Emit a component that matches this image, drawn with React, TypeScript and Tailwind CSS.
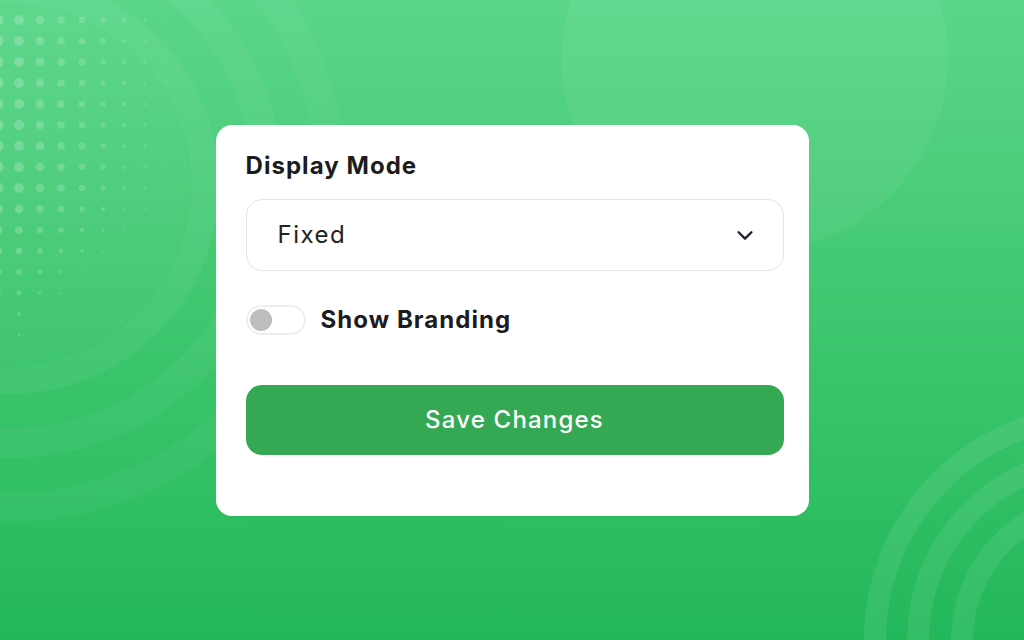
import React, { useState } from "react";

const dots = Array.from({ length: 16 }).flatMap((_, row) =>
  Array.from({ length: 9 }).map((_, col) => {
    const r = Math.max(0, 5.5 - col * 0.55 - Math.max(0, row - 8) * 0.55);
    return { x: col * 21 - 2, y: 20 + row * 21, r, o: 0.22 - col * 0.015 };
  })
);

function Backdrop() {
  return (
    <svg
      className="absolute inset-0 h-full w-full pointer-events-none"
      viewBox="0 0 1024 640"
      preserveAspectRatio="none"
    >
      {/* big soft circle top right */}
      <circle cx="755" cy="58" r="193" fill="#ffffff" fillOpacity="0.05" />

      {/* left rings */}
      <circle cx="10" cy="185" r="180" fill="#ffffff" fillOpacity="0.03" />
      <circle cx="10" cy="185" r="195" fill="none" stroke="#ffffff" strokeOpacity="0.05" strokeWidth="28" />
      <circle cx="10" cy="185" r="258" fill="none" stroke="#ffffff" strokeOpacity="0.045" strokeWidth="30" />
      <circle cx="10" cy="185" r="322" fill="none" stroke="#ffffff" strokeOpacity="0.035" strokeWidth="30" />

      {/* dot grid */}
      {dots
        .filter((d) => d.r > 0.6)
        .map((d, i) => (
          <circle key={i} cx={d.x} cy={d.y} r={d.r} fill="#ffffff" fillOpacity={Math.max(0.06, d.o)} />
        ))}

      {/* bottom right rings */}
      <circle cx="1100" cy="640" r="225" fill="none" stroke="#ffffff" strokeOpacity="0.08" strokeWidth="22" />
      <circle cx="1100" cy="640" r="182" fill="none" stroke="#ffffff" strokeOpacity="0.08" strokeWidth="22" />
      <circle cx="1100" cy="640" r="138" fill="none" stroke="#ffffff" strokeOpacity="0.08" strokeWidth="22" />
    </svg>
  );
}

export default function App() {
  const [branding, setBranding] = useState(false);

  return (
    <div
      className="relative min-h-screen w-full overflow-hidden flex items-center justify-center bg-gradient-to-b from-[#5bd68a] via-[#3ec76e] to-[#22b85a]"
      style={{ fontFamily: "Inter, 'Noto Sans', sans-serif" }}
    >
      <Backdrop />

      <div className="relative w-[593px] bg-white rounded-[16px] pl-[30px] pr-[25px] pt-[25px] pb-[61px]">
        {/* Display mode */}
        <h2 className="text-[24px] leading-[32px] font-bold text-[#1c1c1e] tracking-[1.05px]">
          Display Mode
        </h2>

        <button className="mt-[17px] w-full h-[72px] rounded-[16px] border border-[#e4e6ea] bg-white flex items-center justify-between pl-[31px] pr-[27px]">
          <span className="text-[24px] leading-[32px] text-[#222222] tracking-[1.5px]">Fixed</span>
          <svg width="22" height="22" viewBox="0 0 24 24" fill="none" stroke="#1f2430" strokeWidth="2.6" strokeLinecap="round" strokeLinejoin="round">
            <path d="M5 9l7 7 7-7" />
          </svg>
        </button>

        {/* Branding toggle */}
        <div className="mt-[34px] h-[30px] flex items-center gap-[15px]">
          <button
            onClick={() => setBranding(!branding)}
            className="w-[60px] h-[30px] rounded-full border-2 border-[#eeeeee] bg-white flex items-center px-[2px]"
          >
            <span className="w-[22px] h-[22px] rounded-full bg-[#bdbdbd]" />
          </button>
          <span className="text-[24px] leading-[30px] font-bold text-[#1c1c1e] tracking-[1.05px]">Show Branding</span>
        </div>

        {/* Save */}
        <button className="mt-[50px] w-full h-[70px] rounded-[16px] bg-[#34a853] text-white text-[24px] leading-[32px] font-medium tracking-[1.2px]">
          Save Changes
        </button>
      </div>
    </div>
  );
}
